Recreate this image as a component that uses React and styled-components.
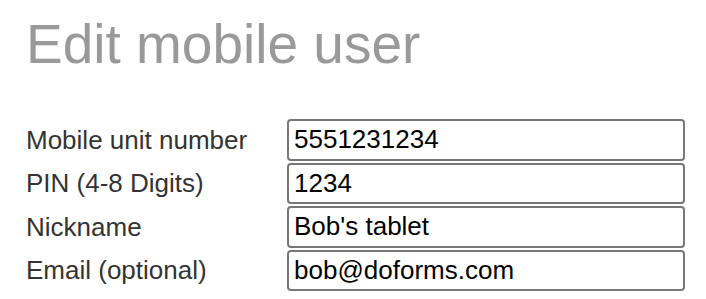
import React from "react";
import styled, { createGlobalStyle } from "styled-components";

const GlobalStyle = createGlobalStyle`
  html, body {
    margin: 0;
    padding: 0;
    background: #ffffff;
  }
  body {
    font-family: "Liberation Sans", Arial, sans-serif;
  }
`;

const Page = styled.div`
  padding: 13px 0 0 26px;
`;

const Title = styled.h1`
  margin: 0 0 44px;
  font-size: 55px;
  line-height: 62px;
  font-weight: normal;
  color: #999999;
`;

const Form = styled.form`
  display: grid;
  grid-template-columns: 261px 398px;
  grid-auto-rows: 41.5px;
  row-gap: 2px;
  align-items: center;
`;

const Label = styled.label`
  font-size: 26px;
  line-height: 30px;
  color: #333333;
`;

const Field = styled.input`
  box-sizing: border-box;
  width: 100%;
  height: 41.5px;
  margin: 0;
  padding: 0 5px;
  border: 2px solid #777777;
  border-radius: 4px;
  font-family: "Liberation Sans", Arial, sans-serif;
  font-size: 26px;
  color: #000000;
  background: #ffffff;
  outline: none;
`;

const fields = [
  { id: "unit", label: "Mobile unit number", value: "5551231234" },
  { id: "pin", label: "PIN (4-8 Digits)", value: "1234" },
  { id: "nick", label: "Nickname", value: "Bob's tablet" },
  { id: "email", label: "Email (optional)", value: "bob@doforms.com" },
];

const App = () => {
  return (
    <>
      <GlobalStyle />
      <Page>
        <Title>Edit mobile user</Title>
        <Form onSubmit={e => e.preventDefault()}>
          {fields.map(f => (
            <React.Fragment key={f.id}>
              <Label htmlFor={f.id}>{f.label}</Label>
              <Field id={f.id} defaultValue={f.value} />
            </React.Fragment>
          ))}
        </Form>
      </Page>
    </>
  );
};

export default App;
